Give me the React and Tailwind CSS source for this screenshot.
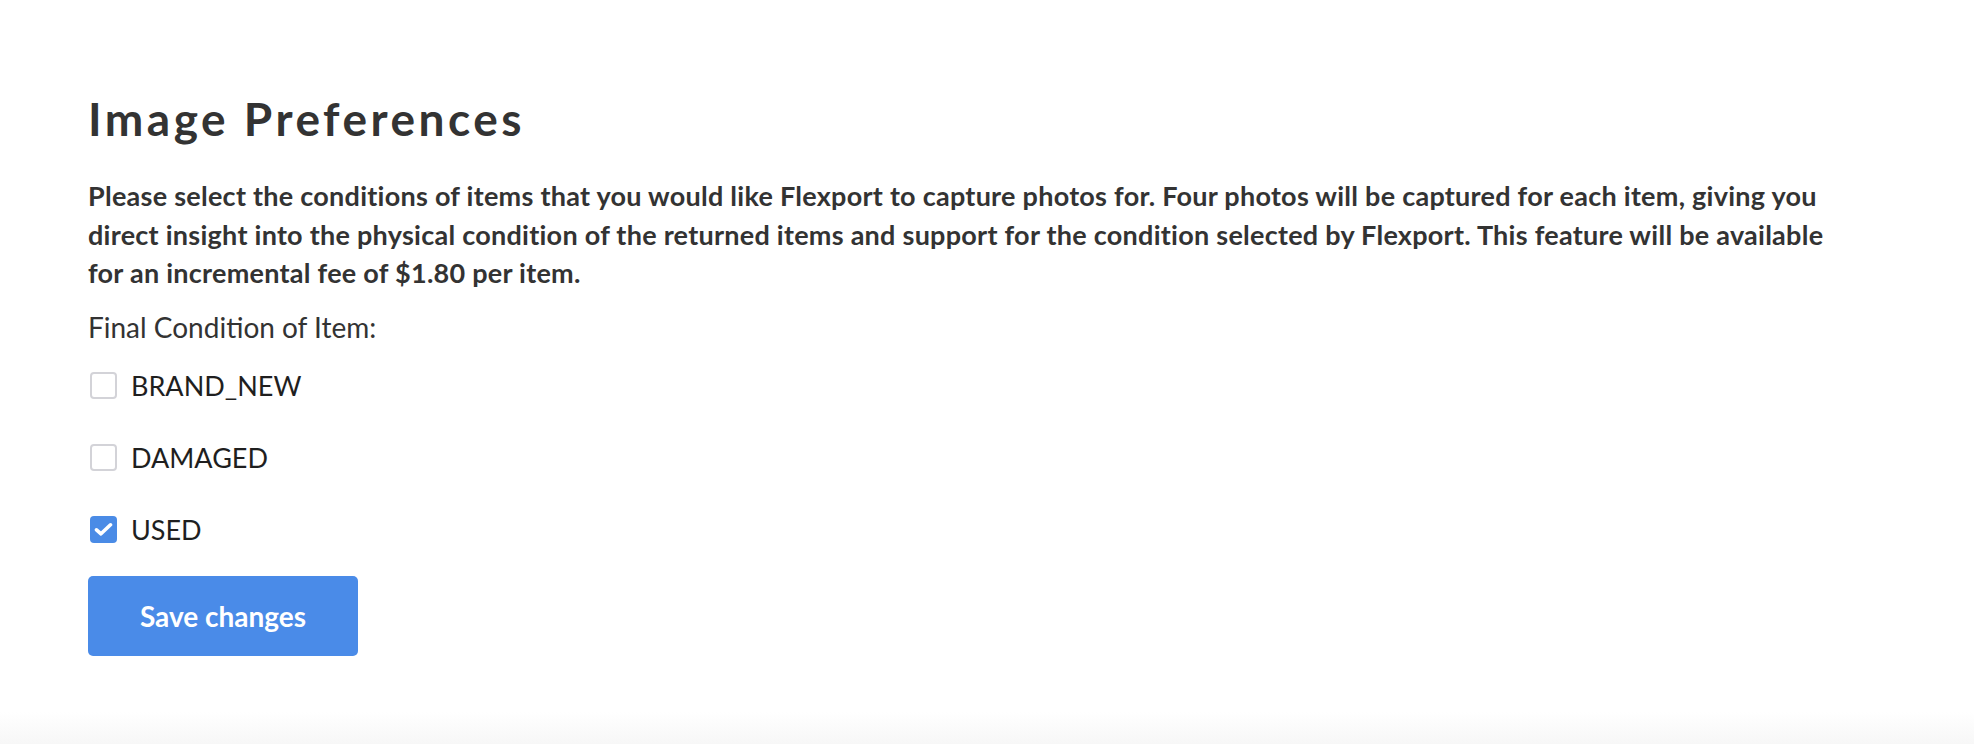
import React, { useState } from "react";

function Box({ checked }) {
  if (checked) {
    return (
      <span className="flex h-[27px] w-[27px] shrink-0 items-center justify-center rounded-[4px] bg-[#4a8be6]">
        <svg width="19" height="15" viewBox="0 0 19 15" fill="none">
          <path d="M2.5 7.8 L7 11.8 L16.5 2.8" stroke="#ffffff" strokeWidth="3.6" strokeLinecap="round" strokeLinejoin="round" />
        </svg>
      </span>
    );
  }
  return <span className="block h-[27px] w-[27px] shrink-0 rounded-[4px] border-2 border-[#d3d3d8] bg-white" />;
}

export default function App() {
  const [vals, setVals] = useState({ BRAND_NEW: false, DAMAGED: false, USED: true });
  const items = ["BRAND_NEW", "DAMAGED", "USED"];
  return (
    <div className="relative h-[744px] w-[1974px] overflow-hidden bg-white" style={{ fontFamily: "Lato, 'Open Sans', sans-serif" }}>
      <div className="pl-[88px] pt-[91px]">
        <h1 className="text-[46px] font-bold leading-[1.2] tracking-[3.5px] text-[#333333]">Image Preferences</h1>
        <p className="mt-[31px] w-[1777px] text-[27px] font-bold leading-[38.5px] tracking-[0.26px] text-[#333333]">
          Please select the conditions of items that you would like Flexport to capture photos for. Four photos will be captured for each item, giving you direct insight into the physical condition of the returned items and support for the condition selected by Flexport. This feature will be available for an incremental fee of $1.80 per item.
        </p>
        <div className="mt-[15px] text-[28px] leading-[39px] text-[#333333]">Final Condition of Item:</div>
        <div className="mt-[20px] flex flex-col gap-[34px]">
          {items.map((k) => (
            <label key={k} className="flex h-[38px] cursor-pointer items-center gap-[14px] pl-[2px] text-[27px] leading-[38px] text-[#1f1f1f]" onClick={() => setVals({ ...vals, [k]: !vals[k] })}>
              <Box checked={vals[k]} />
              <span>{k}</span>
            </label>
          ))}
        </div>
        <button className="mt-[27px] flex h-[80px] w-[270px] items-center justify-center rounded-[5px] bg-[#4a8be8] text-[28px] font-bold text-white">
          Save changes
        </button>
      </div>
      <div className="absolute bottom-0 left-0 h-[32px] w-full bg-gradient-to-b from-white to-[#f7f7f7]" />
    </div>
  );
}
